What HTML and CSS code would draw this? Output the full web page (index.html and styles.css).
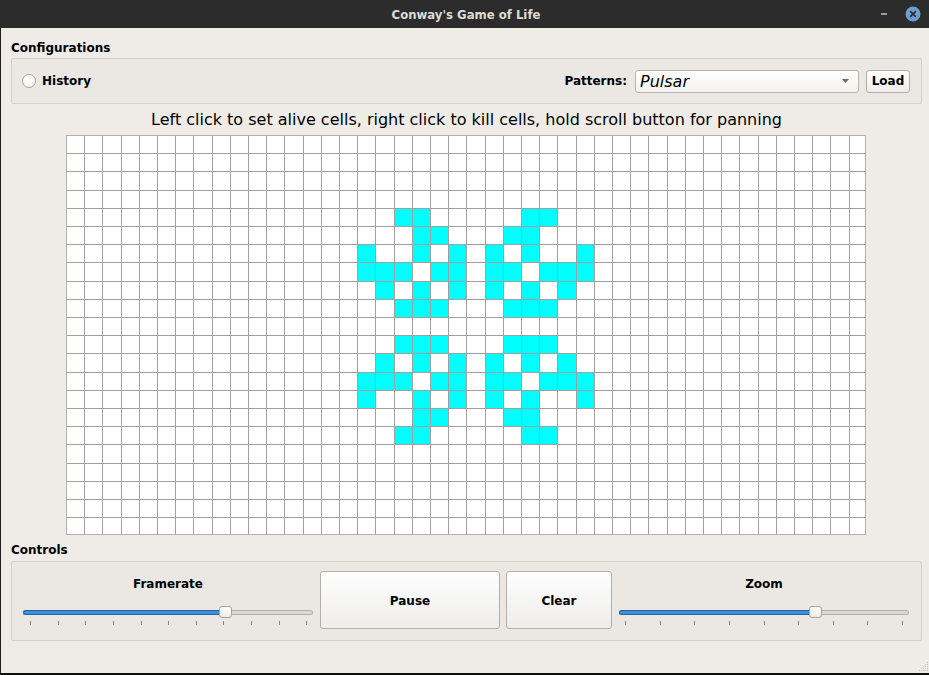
FILE: index.html
```html
<!DOCTYPE html>
<html>
<head>
<meta charset="utf-8">
<title>Conway's Game of Life</title>
<link rel="stylesheet" href="styles.css">
</head>
<body>
<div class="window">
  <header class="titlebar">
    <span class="title">Conway's Game of Life</span>
    <div class="wm-buttons">
      <span class="wm-min"></span>
      <svg class="wm-close" width="16" height="16" viewBox="0 0 16 16"><circle cx="8" cy="8" r="7.5" fill="#6b9fcc"/><path d="M5.6 5.6l4.8 4.8M10.4 5.6l-4.8 4.8" stroke="#2a2f36" stroke-width="1.7" stroke-linecap="round"/></svg>
    </div>
  </header>
  <main class="client">
    <div class="group-title">Configurations</div>
    <section class="groupbox config">
      <label class="radio"><span class="radio-dot"></span><span class="radio-text">History</span></label>
      <div class="patterns">
        <span class="patterns-label">Patterns:</span>
        <div class="combo"><span class="combo-text">Pulsar</span><svg class="combo-arrow" width="7" height="4" viewBox="0 0 7 4"><path d="M0 0h7L3.5 4z" fill="#6a6a6a"/></svg></div>
        <button class="btn load">Load</button>
      </div>
    </section>
    <p class="hint">Left click to set alive cells, right click to kill cells, hold scroll button for panning</p>
    <div class="board-wrap">
      <svg class="board" width="800" height="400" viewBox="0 0 800 400">
        <rect x="0" y="0" width="800" height="400" fill="#ffffff"/>
        <path fill="#00ffff" d="M328 73h36v18h-36z M455 73h36v18h-36z
M346 91h36v18h-36z M437 91h36v18h-36z
M291 109h18v18h-18z M346 109h18v18h-18z M382 109h18v18h-18z M419 109h18v18h-18z M455 109h18v18h-18z M510 109h18v18h-18z
M291 127h55v19h-55z M364 127h36v19h-36z M419 127h36v19h-36z M473 127h55v19h-55z
M309 146h19v18h-19z M346 146h18v18h-18z M382 146h18v18h-18z M419 146h18v18h-18z M455 146h18v18h-18z M491 146h19v18h-19z
M328 164h54v18h-54z M437 164h54v18h-54z
M328 200h54v18h-54z M437 200h54v18h-54z
M309 218h19v19h-19z M346 218h18v19h-18z M382 218h18v19h-18z M419 218h18v19h-18z M455 218h18v19h-18z M491 218h19v19h-19z
M291 237h55v18h-55z M364 237h36v18h-36z M419 237h36v18h-36z M473 237h55v18h-55z
M291 255h18v18h-18z M346 255h18v18h-18z M382 255h18v18h-18z M419 255h18v18h-18z M455 255h18v18h-18z M510 255h18v18h-18z
M346 273h36v18h-36z M437 273h36v18h-36z
M328 291h36v18h-36z M455 291h36v18h-36z"/>
        <path fill="none" stroke="#a0a0a0" stroke-width="1" d="M18.5 0V400M36.5 0V400M55.5 0V400M73.5 0V400M91.5 0V400M109.5 0V400M127.5 0V400M146.5 0V400M164.5 0V400M182.5 0V400M200.5 0V400M218.5 0V400M237.5 0V400M255.5 0V400M273.5 0V400M291.5 0V400M309.5 0V400M328.5 0V400M346.5 0V400M364.5 0V400M382.5 0V400M400.5 0V400M419.5 0V400M437.5 0V400M455.5 0V400M473.5 0V400M491.5 0V400M510.5 0V400M528.5 0V400M546.5 0V400M564.5 0V400M582.5 0V400M601.5 0V400M619.5 0V400M637.5 0V400M655.5 0V400M673.5 0V400M692.5 0V400M710.5 0V400M728.5 0V400M746.5 0V400M764.5 0V400M783.5 0V400
M0 18.5H800M0 36.5H800M0 55.5H800M0 73.5H800M0 91.5H800M0 109.5H800M0 127.5H800M0 146.5H800M0 164.5H800M0 182.5H800M0 200.5H800M0 218.5H800M0 237.5H800M0 255.5H800M0 273.5H800M0 291.5H800M0 309.5H800M0 328.5H800M0 346.5H800M0 364.5H800M0 382.5H800"/>
        <rect x="0.5" y="0.5" width="799" height="399" fill="none" stroke="#b3afaa" stroke-width="1"/>
      </svg>
    </div>
    <div class="group-title controls-title">Controls</div>
    <section class="groupbox controls">
      <div class="slider-col">
        <div class="slider-label">Framerate</div>
        <div class="slider">
          <span class="track-fill track-fr"></span>
          <span class="handle"></span>
          <span class="track-rest"></span>
        </div>
        <div class="ticks ticks-fr"><i></i><i></i><i></i><i></i><i></i><i></i><i></i><i></i><i></i><i></i><i></i></div>
      </div>
      <button class="btn big pause">Pause</button>
      <button class="btn big clear">Clear</button>
      <div class="slider-col">
        <div class="slider-label">Zoom</div>
        <div class="slider">
          <span class="track-fill track-zoom"></span>
          <span class="handle"></span>
          <span class="track-rest"></span>
        </div>
        <div class="ticks ticks-zoom"><i></i><i></i><i></i><i></i><i></i><i></i><i></i><i></i><i></i></div>
      </div>
    </section>
    <svg class="grip" width="10" height="10" viewBox="0 0 10 10"><g fill="#c4c0bb"><rect x="8" y="0" width="1" height="1"/><rect x="6" y="2" width="1" height="1"/><rect x="8" y="2" width="1" height="1"/><rect x="4" y="4" width="1" height="1"/><rect x="6" y="4" width="1" height="1"/><rect x="8" y="4" width="1" height="1"/><rect x="2" y="6" width="1" height="1"/><rect x="4" y="6" width="1" height="1"/><rect x="6" y="6" width="1" height="1"/><rect x="8" y="6" width="1" height="1"/><rect x="0" y="8" width="1" height="1"/><rect x="2" y="8" width="1" height="1"/><rect x="4" y="8" width="1" height="1"/><rect x="6" y="8" width="1" height="1"/><rect x="8" y="8" width="1" height="1"/></g></svg>
  </main>
</div>
</body>
</html>
```

FILE: styles.css
```css
html, body {
  margin: 0;
  padding: 0;
}
body {
  width: 929px;
  height: 675px;
  overflow: hidden;
  background: #000;
}
.window {
  width: 929px;
  height: 675px;
  display: flex;
  flex-direction: column;
  font-family: "DejaVu Sans", "Liberation Sans", sans-serif;
  font-size: 12px;
  color: #000;
}
.titlebar {
  height: 28px;
  flex: none;
  background: #2c2c2c;
  display: flex;
  align-items: center;
  justify-content: center;
  position: relative;
}
.title {
  font-family: "DejaVu Sans Condensed", "DejaVu Sans", sans-serif;
  font-stretch: condensed;
  font-weight: bold;
  font-size: 13px;
  color: #dedbd4;
  margin-left: 3px;
}
.wm-buttons {
  position: absolute;
  right: 8px;
  top: 6px;
  display: flex;
  align-items: center;
  gap: 18px;
}
.wm-min {
  width: 6px;
  height: 2px;
  background: #9a9a9a;
}
.wm-close {
  display: block;
}
.client {
  flex: 1;
  display: flex;
  flex-direction: column;
  background: #efece8;
  border-left: 1px solid #202020;
  border-bottom: 2px solid #0c0c0c;
  padding: 12px 7px 0 10px;
}
.group-title {
  font-weight: bold;
  line-height: 16px;
  height: 16px;
}
.groupbox {
  border: 1px solid #d4d0cb;
  border-radius: 2px;
  background: #ebe8e4;
  box-sizing: border-box;
  display: flex;
  align-items: center;
}
.config {
  margin-top: 2px;
  height: 46px;
  padding: 0 11px 0 10px;
}
.radio {
  display: flex;
  align-items: center;
  font-weight: bold;
}
.radio-dot {
  width: 14px;
  height: 14px;
  box-sizing: border-box;
  border-radius: 50%;
  border: 1px solid #a7a39f;
  background: linear-gradient(#ffffff, #f4f3f2);
}
.radio-text {
  margin-left: 6px;
}
.patterns {
  margin-left: auto;
  display: flex;
  align-items: center;
}
.patterns-label {
  font-weight: bold;
  margin-right: 8px;
}
.combo {
  width: 224px;
  height: 23px;
  box-sizing: border-box;
  border: 1px solid #b7b3ae;
  border-radius: 3px;
  background: linear-gradient(#ffffff, #f3f2f0);
  display: flex;
  align-items: center;
  padding: 0 9px 0 4px;
}
.combo-text {
  font-size: 16px;
  font-style: italic;
  flex: 1;
}
.combo-arrow {
  display: block;
}
.btn {
  font-family: "DejaVu Sans", "Liberation Sans", sans-serif;
  font-weight: bold;
  font-size: 12px;
  color: #000;
  border: 1px solid #b3afaa;
  border-radius: 3px;
  background: linear-gradient(#fefefe, #eeedeb);
  padding: 0;
  box-sizing: border-box;
}
.load {
  width: 44px;
  height: 23px;
  margin-left: 7px;
}
.hint {
  margin: 6px 0 0 0;
  font-size: 16px;
  line-height: 19px;
  text-align: center;
}
.board-wrap {
  margin-top: 6px;
  display: flex;
  justify-content: flex-start;
  padding-left: 55px;
}
.board {
  display: block;
}
.controls-title {
  margin-top: 7px;
}
.controls {
  margin-top: 3px;
  height: 80px;
  padding: 9px 11px 11px 11px;
  align-items: stretch;
  gap: 6px;
}
.slider-col {
  width: 290px;
  flex: none;
  display: flex;
  flex-direction: column;
}
.slider-col:first-child {
  margin-right: 1px;
}
.slider-col:last-child {
  margin-left: 1px;
}
.slider-label {
  margin-top: 5px;
  line-height: 16px;
  font-weight: bold;
  text-align: center;
}
.slider {
  margin-top: 14px;
  height: 12px;
  display: flex;
  align-items: center;
}
.track-fill {
  height: 5px;
  box-sizing: border-box;
  background: #3d8fdb;
  border: 1px solid #27649e;
  border-right: none;
  border-radius: 3px 0 0 3px;
}
.track-fr {
  width: 196px;
}
.track-zoom {
  width: 190px;
}
.handle {
  width: 13px;
  height: 12px;
  box-sizing: border-box;
  border: 1px solid #a5a19c;
  border-radius: 3px;
  background: linear-gradient(#ffffff, #ebeae8);
  flex: none;
}
.track-rest {
  flex: 1;
  height: 5px;
  box-sizing: border-box;
  background: #dbd7d2;
  border: 1px solid #b3afaa;
  border-left: none;
  border-radius: 0 3px 3px 0;
}
.ticks {
  margin-top: 3px;
  height: 4px;
  display: flex;
}
.ticks i {
  width: 1px;
  height: 4px;
  background: #8a8784;
}
.ticks-fr {
  padding: 0 6px 0 7px;
  gap: 27px;
}
.ticks-fr i:last-child {
  margin-left: auto;
}
.ticks-zoom {
  padding: 0 6px;
  justify-content: space-between;
}
.big {
  height: 58px;
  padding-top: 2px;
}
.pause {
  width: 180px;
}
.clear {
  width: 106px;
}
.grip {
  display: block;
  margin-top: auto;
  margin-bottom: 1px;
  align-self: flex-end;
  margin-right: -7px;
}
```
